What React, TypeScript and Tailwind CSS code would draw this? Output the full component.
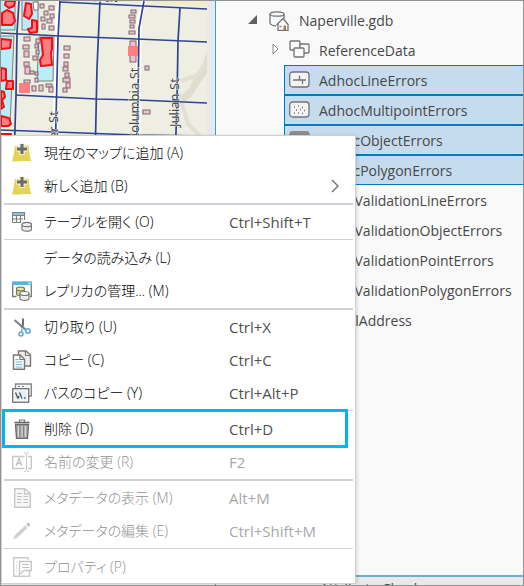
import type { ReactNode } from "react";

function Icon({ children }: { children: ReactNode }) {
  return (
    <svg viewBox="0 0 20 20" className="size-5 shrink-0" fill="none" aria-hidden="true">
      {children}
    </svg>
  );
}

const AddToMapIcon = () => (
  <Icon>
    <path d="M3 3C7 3.300 12 2 17 3C17 8 17.500 13 19.500 18.500C13 17 6 19.500 0 18C1.500 13 2.500 8 3 3Z" fill="#e3d357" />
    <path d="M10 .5V12M4.500 6H15.500" stroke="#f4efc9" strokeWidth="5.500" />
    <path d="M10 1V11M5 6H15" stroke="#6b6b6b" strokeWidth="3" />
  </Icon>
);

const TableIcon = () => (
  <Icon>
    <rect x="0.500" y="0.500" width="12" height="3" fill="#8bc4dc" />
    <path d="M.5 .5V10.500H9M.5 .5H12.500V8M.5 3.500H12.500M.5 7H11M4.500 3.500V10.500M8.500 3.500V10.500" stroke="#808080" strokeWidth="1.200" />
    <path d="M10 12.500V17C10 19.800 19.500 19.800 19.500 17V12.500" fill="#eee" stroke="#777" strokeWidth="1.200" />
    <ellipse cx="14.750" cy="12.500" rx="4.750" ry="2.200" fill="#eee" stroke="#777" strokeWidth="1.200" />
  </Icon>
);

const ReplicaIcon = () => (
  <Icon>
    <path d="M4.500 15.500H.7V1.500H19.300V15.500H18" fill="#fff" stroke="#777" strokeWidth="1.300" />
    <path d="M0 .5H20V4H0Z" fill="#62aede" />
    <path d="M16 2.200H19" stroke="#fff" />
    <path d="M4.500 8V13C4.500 15 12.500 15 12.500 13V8" fill="#e3d778" stroke="#777" strokeWidth="1.200" />
    <ellipse cx="8.500" cy="8" rx="4" ry="1.800" fill="#f0e79b" stroke="#777" strokeWidth="1.200" />
    <path d="M8 12.500V17.500C8 20 17 20 17 17.500V12.500" fill="#eee" stroke="#777" strokeWidth="1.200" />
    <ellipse cx="12.500" cy="12.500" rx="4.500" ry="2" fill="#fff" stroke="#777" strokeWidth="1.200" />
  </Icon>
);

const CutIcon = () => (
  <Icon>
    <path d="M2.500 3L14 13" stroke="#808080" strokeWidth="2.200" />
    <path d="M11 1.500V8L9.500 10.500" stroke="#707070" strokeWidth="2" />
    <path d="M10 11.500L9.500 15M12 12L14 13.500" stroke="#5ba7dc" strokeWidth="1.500" />
    <circle cx="9" cy="17" r="2" stroke="#5ba7dc" strokeWidth="1.500" />
    <circle cx="16" cy="14" r="2.200" stroke="#5ba7dc" strokeWidth="1.500" />
  </Icon>
);

const CopyIcon = () => (
  <Icon>
    <path d="M6.500 1H14L18.500 5V16H6.500Z" fill="#eee" stroke="#777" strokeWidth="1.400" />
    <path d="M13.500 1V5.500H18" stroke="#777" strokeWidth="1.200" />
    <path d="M1.500 5H8L12.500 9V19.300H1.500Z" fill="#fff" stroke="#777" strokeWidth="1.400" />
    <path d="M8 5V9.500H12" stroke="#777" strokeWidth="1.200" />
    <path d="M3.500 9.500H6.500M3.500 12H10.500M3.500 14.500H10.500M3.500 17H10.500" stroke="#6bb6e6" strokeWidth="1.200" />
  </Icon>
);

const CopyPathIcon = () => (
  <Icon>
    <path d="M3.500 6V1H19.300V13H17" fill="#eef5fa" stroke="#888" strokeWidth="1.400" />
    <path d="M6 3.500H8M10 3.500H12" stroke="#777" />
    <rect x="0.700" y="5.700" width="16" height="13.500" fill="#fff" stroke="#777" strokeWidth="1.400" />
    <rect x="2.500" y="7.500" width="12.500" height="10" fill="#e3f0f7" />
    <path d="M3.500 9.500L6 15.500M7.500 9.500L10 15.500M6 15.500L7 13M12 15H13.500" stroke="#555" strokeWidth="1.300" />
  </Icon>
);

const DeleteIcon = () => (
  <Icon>
    <path d="M3.500 5.500H16.500L15.500 19.300H4.500Z" fill="#aaa" stroke="#6b6b6b" strokeWidth="1.300" />
    <path d="M2.500 3.500H17.500" stroke="#666" strokeWidth="1.600" />
    <path d="M7.500 3V1H12.500V3" stroke="#777" strokeWidth="1.200" />
    <path d="M6.500 7V17.500M10 7V17.500M13.500 7V17.500" stroke="#dcdcdc" />
    <path d="M8 7V17.500M11.500 7V17.500" stroke="#808080" />
  </Icon>
);

const RenameIcon = () => (
  <Icon>
    <path d="M12.500 4.500H.7V16.500H12.500M16 4.500H19.300V16.500H16" stroke="#c8c8c8" strokeWidth="1.400" />
    <path d="M4 14L7 6.500L10 14M5 11.500H9" stroke="#c0c0c0" strokeWidth="1.300" />
    <path d="M12 .8C13.500 .8 14.500 1.300 14.500 2.300V18C14.500 19 13.500 19.500 12 19.500M17 .8C15.500 .8 14.500 1.300 14.500 2.300M17 19.500C15.500 19.500 14.500 19 14.500 18" stroke="#c8c8c8" />
  </Icon>
);

const MetadataIcon = () => (
  <Icon>
    <path d="M2.700 .7H13L18.300 5.500V19.300H2.700Z" fill="#f6f6f6" stroke="#c8c8c8" strokeWidth="1.400" />
    <path d="M12.500 1V6H18" stroke="#c8c8c8" strokeWidth="1.300" />
    <path d="M5 5.500H10M5 8.500H9.500M5 11.500H9.500M5 14.500H9.500M11.500 8.500H16M11.500 11.500H16M11.500 14.500H16" stroke="#c0c0c0" />
  </Icon>
);

const EditIcon = () => (
  <Icon>
    <path d="M1 18.500L3 14L13 4.500L15.500 7L5.500 16.500Z" fill="#d0d0d0" />
    <path d="M14 3.500L15.500 2C16.500 1 19 3.200 18 4.700L16.500 6Z" fill="#c4c4c4" />
  </Icon>
);

const PropertiesIcon = () => (
  <Icon>
    <path d="M16 3V.8H1.700V19.300H17.500V14" stroke="#cbcbcb" strokeWidth="1.400" />
    <path d="M4 5H5M4 8H5M4 11H5M4 14H5" stroke="#c0c0c0" />
    <path d="M7.500 4.500H19.300V13.500H12L7.500 17.500Z" fill="#fff" stroke="#c6c6c6" strokeWidth="1.400" />
    <path d="M10 7.500H17M10 10.500H17" stroke="#c0c0c0" strokeWidth="1.200" />
  </Icon>
);

type Item = { label: string; icon?: ReactNode; shortcut?: string; submenu?: boolean; disabled?: boolean; marked?: boolean };

const groups: Item[][] = [
  [
    { label: "現在のマップに追加 (A)", icon: <AddToMapIcon /> },
    { label: "新しく追加 (B)", icon: <AddToMapIcon />, submenu: true },
  ],
  [{ label: "テーブルを開く (O)", icon: <TableIcon />, shortcut: "Ctrl+Shift+T" }],
  [{ label: "データの読み込み (L)" }, { label: "レプリカの管理... (M)", icon: <ReplicaIcon /> }],
  [
    { label: "切り取り (U)", icon: <CutIcon />, shortcut: "Ctrl+X" },
    { label: "コピー (C)", icon: <CopyIcon />, shortcut: "Ctrl+C" },
    { label: "パスのコピー (Y)", icon: <CopyPathIcon />, shortcut: "Ctrl+Alt+P" },
  ],
  [
    { label: "削除 (D)", icon: <DeleteIcon />, shortcut: "Ctrl+D", marked: true },
    { label: "名前の変更 (R)", icon: <RenameIcon />, shortcut: "F2", disabled: true },
  ],
  [
    { label: "メタデータの表示 (M)", icon: <MetadataIcon />, shortcut: "Alt+M", disabled: true },
    { label: "メタデータの編集 (E)", icon: <EditIcon />, shortcut: "Ctrl+Shift+M", disabled: true },
  ],
  [{ label: "プロパティ (P)", icon: <PropertiesIcon />, disabled: true }],
];

function MenuItem({ item }: { item: Item }) {
  return (
    <button
      type="button"
      role="menuitem"
      disabled={item.disabled}
      className="relative flex h-[33px] w-full items-center pl-2.5 text-left text-black disabled:text-[#929292]"
    >
      <span className="flex w-8 shrink-0">{item.icon}</span>
      <span className="w-[185px] shrink-0 text-sm font-light whitespace-nowrap">{item.label}</span>
      <span className={item.disabled ? "flex-1 text-[#a8a8a8]" : "flex-1 text-[#505050]"}>{item.shortcut}</span>
      {item.submenu && (
        <svg viewBox="0 0 8 14" className="mr-4 h-3.5 w-2" fill="none" aria-hidden="true">
          <path d="M1 1L7 7L1 13" stroke="#777" strokeWidth="1.500" />
        </svg>
      )}
      {item.marked && <span className="absolute -inset-y-[3px] right-[7px] left-0 z-10 border-3 border-[#00b6ee]" />}
    </button>
  );
}

function ContextMenu() {
  return (
    <div
      role="menu"
      className="absolute top-[134px] left-0 w-[355px] border border-[#d0d0d4] bg-white text-[15px] leading-5 shadow-[2px_0_3px_#0000001a]"
    >
      {groups.map((group, i) => (
        <div key={group[0].label}>
          {i > 0 && (
            <div role="separator" className="mx-0.5 flex h-[3px] items-center">
              <div className={i % 2 ? "h-0.5 w-full bg-[#d0d0d8]" : "h-px w-full bg-[#d0d0d8]"} />
            </div>
          )}
          {group.map((item) => (
            <MenuItem key={item.label} item={item} />
          ))}
        </div>
      ))}
    </div>
  );
}

function StreetMap() {
  const houses: [number, number, number, number][] = [
    [39, 3, 4, 4], [48, 5, 5, 4], [43, 10, 4, 4], [49, 13, 4, 4], [40, 16, 4, 4], [46, 18, 5, 4], [41, 23, 3, 5], [48, 25, 5, 4],
    [23, 36, 6, 4], [35, 38, 4, 4], [22, 44, 6, 4], [34, 43, 3, 4], [23, 50, 5, 6], [35, 49, 3, 4], [32, 55, 4, 4], [23, 61, 5, 4],
    [24, 66, 5, 7], [29, 70, 4, 3], [34, 71, 3, 3], [34, 77, 3, 4], [23, 79, 6, 3], [31, 85, 4, 5], [38, 84, 4, 6], [45, 83, 6, 3], [48, 86, 4, 5],
    [63, 45, 6, 4], [63, 53, 5, 4], [63, 61, 4, 4], [62, 66, 5, 4], [64, 72, 4, 4], [62, 77, 7, 4], [65, 82, 4, 5], [62, 87, 4, 4],
    [130, 9, 5, 3], [128, 14, 6, 3], [129, 19, 5, 3], [129, 24, 4, 3], [128, 30, 6, 3], [129, 40, 6, 21], [144, 65, 4, 4], [142, 109, 7, 4],
  ];
  return (
    <svg viewBox="0 0 206 160" className="block h-40 w-full" preserveAspectRatio="xMinYMin slice" role="img" aria-label="地図">
      <rect width="206" height="600" fill="#eeeee3" />
      <path d="M206 50L201 65L195 73L189 86L181 94L177 105L190 96L199 82L206 72Z" fill="#dfddd0" />
      <path d="M180 80L197 74L206 59M178 93L187 123L199 135" stroke="#e2e0d5" strokeWidth="4" fill="none" />
      <path d="M143 0L138 20L137 160M58 0L56 30L54 160" stroke="#fff" strokeWidth="5" fill="none" />
      <path d="M59 0H140L206 4V0Z" fill="#fff" />
      <path d="M145 0H206V5L145 2Z" fill="#f1ecc9" />
      <g fill="#b9edfa" stroke="#77847e">
        <path d="M-2 -2H14V29H-2ZM21 -2H37V29H21ZM-2 35H13L9 125H-2ZM38 36H53L52 80H36Z" />
      </g>
      <path d="M32 1H37V9H33Z" fill="#fff" stroke="#777" />
      <g fill="#f5bdcd" stroke="#746b70">
        {houses.map(([x, y, w, h]) => (
          <rect key={`${x}-${y}`} x={x} y={y} width={w} height={h} />
        ))}
      </g>
      <g fill="#ff7e82" stroke="#f50b14" strokeWidth="2" strokeLinejoin="round">
        <path d="M5 0L4 4L8 7L13 5L14 0ZM1 12L6 9L12 12L14 20L11 24L1 24ZM25 2L30 3L31 13L28 18L23 15ZM31 19L36 20V31L29 32L27 28L31 27ZM40 37H51V48L50 52L51 64L40 65L39 59L42 54L41 45ZM0 38L10 39L9 47L0 48ZM0 67L5 68V79L0 80ZM6 80H12V88H5ZM0 90L3 91L4 96L1 99L3 106L0 108ZM0 115L8 117L10 123L7 125H0ZM0 133L10 133V140H0Z" />
      </g>
      <g stroke="#2f4490" strokeWidth="1.700" fill="none">
        <path d="M18 0L16 32L15 94L13 160M59 0L57 37L54 160M99 0L96 67L94 160M143 0L138 27L137 97L135 160M179 7L177 40L176 102L174 160" />
        <path d="M58 1L143 5L206 8M0 32L59 35L136 38L206 41M15 94L95 98L137 99L206 102M0 129L54 131L135 134L206 135" />
      </g>
      <path d="M127 45H137V55H127ZM18 82H29V92H18Z" fill="#ff7f80" />
      <g fill="#484848" stroke="#f4f4ee" strokeWidth="1" paintOrder="stroke" className="font-['Noto_Sans'] text-[13px]">
        <text transform="translate(138 140) rotate(-90)">Columbia St</text>
        <text transform="translate(178 126) rotate(-90)">Julian St</text>
        <text transform="translate(57 138) rotate(-90)">er St</text>
        <text transform="translate(62 -1) rotate(2)" className="text-[12px]">Roosevelt</text>
      </g>
    </svg>
  );
}

function TreeIcon({ children }: { children: ReactNode }) {
  return (
    <svg viewBox="0 0 22 20" className="mr-2 mb-0.5 h-5 w-[22px] shrink-0" fill="none" stroke="#747474" strokeWidth="1.300" aria-hidden="true">
      {children}
    </svg>
  );
}

const featureClasses: { name: string; selected?: boolean; icon: ReactNode }[] = [
  { name: "AdhocLineErrors", selected: true, icon: <path d="M4 10H17M10.500 5.500V10M13.500 10V14" /> },
  {
    name: "AdhocMultipointErrors",
    selected: true,
    icon: <path d="M5 7H6M9 6H10M13 7.500H14M7 10H8M11 9.500H12M15 10.500H16M5 13H6M9 13H10M13 13.500H14" />,
  },
  { name: "AdhocObjectErrors", selected: true, icon: <path d="M1 4H20" stroke="#8c8c8c" strokeWidth="5" /> },
  { name: "AdhocPolygonErrors", selected: true, icon: <path d="M6 7H15V13H6Z" /> },
  { name: "GDB_ValidationLineErrors", icon: <path d="M5 10H17" /> },
  { name: "GDB_ValidationObjectErrors", icon: <path d="M2 6H20" /> },
  { name: "GDB_ValidationPointErrors", icon: <path d="M10 10H12" /> },
  { name: "GDB_ValidationPolygonErrors", icon: <path d="M6 7H15V13H6Z" /> },
];

function Catalog() {
  return (
    <section className="flex min-w-0 flex-1 flex-col overflow-hidden border-l border-[#3d9bd3] bg-[#f9f9f9] text-sm text-[#484848]">
      <ul role="tree" className="flex-1 pt-1">
        <li role="treeitem" aria-expanded="true" className="flex h-[30px] items-center pt-0.5 pl-8">
          <svg viewBox="0 0 9 9" className="mr-3 mb-1 size-[9px]" aria-hidden="true">
            <path d="M9 0V9H0Z" fill="#606060" />
          </svg>
          <svg viewBox="0 0 20 20" className="mr-2.5 size-5" fill="none" stroke="#747474" strokeWidth="1.300" aria-hidden="true">
            <path d="M1 3V12C1 14 5 15 7 15M15 3V8" />
            <ellipse cx="8" cy="3" rx="7" ry="2.200" fill="#f5f5f5" />
            <path d="M7.500 14L14 7.500L19.500 14M9 13V19.300H19V13" fill="#fff" />
            <path d="M14.500 14.500H17V19H14.500Z" fill="#b87834" stroke="none" />
            <path d="M10.500 15.500H12.500" />
          </svg>
          Naperville.gdb
        </li>
        <li role="treeitem" aria-expanded="false" className="flex h-[30px] items-center pt-0.5 pl-14">
          <svg viewBox="0 0 7 12" className="mr-2.5 mb-1 h-3 w-[7px]" fill="#fff" stroke="#888" aria-hidden="true">
            <path d="M1 1L6 6L1 11Z" />
          </svg>
          <TreeIcon>
            <rect x="1" y="1" width="10" height="9" rx="1" />
            <rect x="11" y="4" width="9" height="9" rx="1" fill="#f9f9f9" />
            <rect x="5" y="8" width="10" height="9" rx="1" fill="#f9f9f9" />
          </TreeIcon>
          ReferenceData
        </li>
        {featureClasses.map((f) => (
          <li
            key={f.name}
            role="treeitem"
            aria-selected={!!f.selected}
            className={
              f.selected
                ? "ml-17 flex h-[30px] items-center border border-r-0 border-[#0079c1] bg-[#c5dbee] pt-0.5 pl-1"
                : "ml-17 flex h-[30px] items-center pt-0.5 pl-[5px]"
            }
          >
            <TreeIcon>
              <rect x="0.700" y="2" width="19.300" height="15" rx="3" fill="#f4f4f4" />
              {f.icon}
            </TreeIcon>
            {f.name}
          </li>
        ))}
        <li role="treeitem" className="ml-17 flex h-[30px] items-center pt-0.5 pl-[5px]">
          <TreeIcon>
            <rect x="1" y="2" width="19" height="15" rx="3" />
          </TreeIcon>
          PostalAddress
        </li>
      </ul>
      <footer className="h-2.5 overflow-hidden border-t-2 border-[#6baed6] bg-[#e9e9e9] pt-0.5 pl-26 leading-5 whitespace-nowrap">
        Attribute Checks
      </footer>
    </section>
  );
}

export default function App() {
  return (
    <main className="relative flex h-screen overflow-hidden border border-[#929292] bg-[#e9e9e9] font-['Open_Sans','Noto_Sans_CJK_JP',sans-serif] [font-feature-settings:'palt']">
      <div className="w-2/5 max-w-[206px] shrink-0">
        <StreetMap />
      </div>
      <div className="w-2 shrink-0 bg-[#e9e9ec]" />
      <Catalog />
      <ContextMenu />
    </main>
  );
}
